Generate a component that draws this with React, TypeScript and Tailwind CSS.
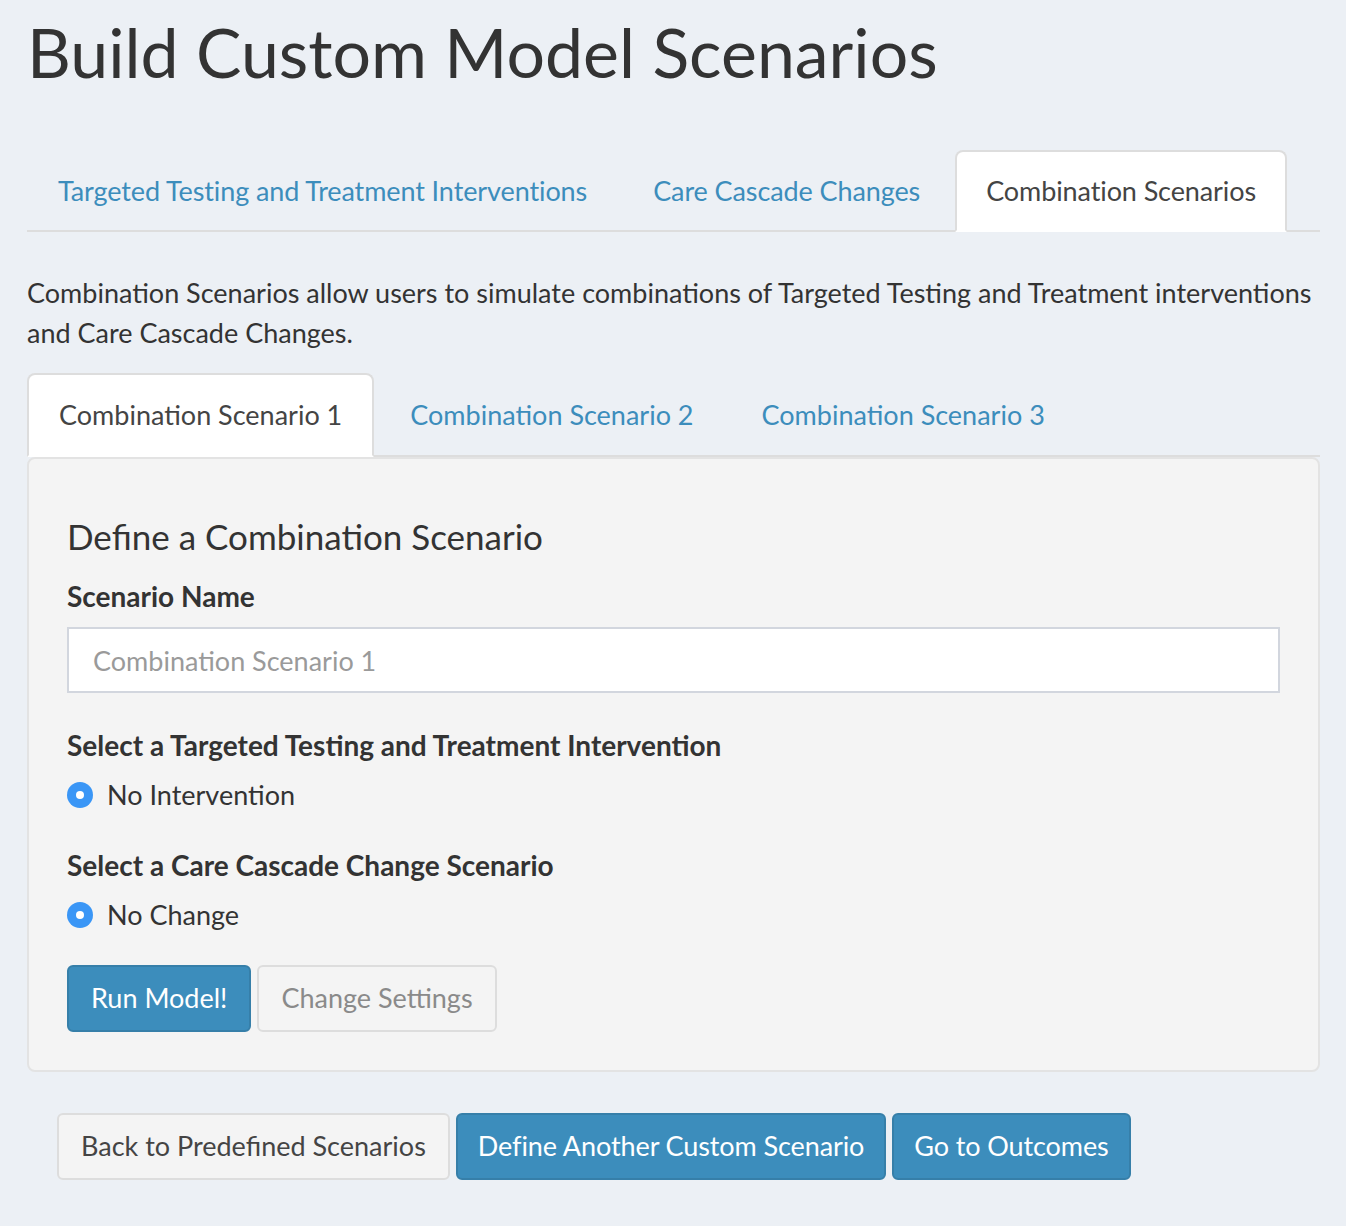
import React from "react";

const font = { fontFamily: "Lato, 'Noto Sans', sans-serif" };

function Radio({ label }: { label: string }) {
  return (
    <label className="flex items-center gap-[14px] h-[40px]">
      <span className="w-[26px] h-[26px] rounded-full bg-[#3a96f6] flex items-center justify-center">
        <span className="w-[8px] h-[8px] rounded-full bg-white" />
      </span>
      <span className="text-[27px] text-[#333]">{label}</span>
    </label>
  );
}

export default function App() {
  const topTabs = ["Targeted Testing and Treatment Interventions", "Care Cascade Changes", "Combination Scenarios"];
  const subTabs = ["Combination Scenario 1", "Combination Scenario 2", "Combination Scenario 3"];

  return (
    <div className="min-h-[1226px] bg-[#ecf0f5] px-[27px] pt-[10px] text-[#333]" style={font}>
      <h1 className="text-[68px] leading-[84px] text-[#333] font-normal">Build Custom Model Scenarios</h1>

      {/* top tabs */}
      <div className="mt-[56px] flex border-b-2 border-[#ddd] w-[1293px]">
        {topTabs.map((t, i) => (
          <div
            key={t}
            className={`mr-[4px] -mb-[2px] px-[29px] h-[82px] flex items-center whitespace-nowrap text-[27px] tracking-[-0.1px] rounded-t-[8px] border-2 ${
              i === 2 ? "bg-white border-[#ddd] border-b-white text-[#444]" : "border-transparent text-[#3c8dbc]"
            }`}
          >
            {t}
          </div>
        ))}
      </div>

      <p className="mt-[41px] text-[27px] leading-[40px] text-[#333] w-[1293px]">
        Combination Scenarios allow users to simulate combinations of Targeted Testing and Treatment interventions
        and Care Cascade Changes.
      </p>

      {/* sub tabs */}
      <div className="mt-[20px] flex border-b-2 border-[#ddd] w-[1293px]">
        {subTabs.map((t, i) => (
          <div
            key={t}
            className={`mr-[4px] -mb-[2px] px-[30px] h-[84px] flex items-center whitespace-nowrap text-[27px] rounded-t-[8px] border-2 ${
              i === 0 ? "bg-white border-[#ddd] border-b-white text-[#444]" : "border-transparent text-[#3c8dbc]"
            }`}
          >
            {t}
          </div>
        ))}
      </div>

      {/* panel */}
      <div className="w-[1293px] bg-[#f4f4f4] border-2 border-[#e3e3e3] rounded-[8px] px-[38px] pt-[55px] pb-[38px]">
        <h4 className="text-[35px] leading-[44px] text-[#333]">Define a Combination Scenario</h4>
        <div className="mt-[18px] text-[28px] leading-[40px] font-bold text-[#333]">Scenario Name</div>
        <input
          className="mt-[11px] w-full h-[66px] bg-white border-2 border-[#d2d6de] px-[24px] text-[27px] placeholder:text-[#9a9a9a] outline-none"
          placeholder="Combination Scenario 1"
          style={font}
        />
        <div className="mt-[32px] text-[28px] leading-[40px] font-bold text-[#333]">
          Select a Targeted Testing and Treatment Intervention
        </div>
        <div className="mt-[10px]">
          <Radio label="No Intervention" />
        </div>
        <div className="mt-[30px] text-[28px] leading-[40px] font-bold text-[#333]">
          Select a Care Cascade Change Scenario
        </div>
        <div className="mt-[10px]">
          <Radio label="No Change" />
        </div>
        <div className="mt-[30px] flex gap-[6px]">
          <button className="h-[67px] px-[22px] rounded-[6px] bg-[#3c8dbc] border-2 border-[#367fa9] text-white text-[27px]">
            Run Model!
          </button>
          <button className="h-[67px] px-[22px] rounded-[6px] bg-[#f4f4f4] border-2 border-[#ddd] text-[#8a8a8a] text-[27px]">
            Change Settings
          </button>
        </div>
      </div>

      {/* bottom buttons */}
      <div className="mt-[41px] ml-[30px] flex gap-[6px]">
        <button className="h-[67px] px-[22px] rounded-[6px] bg-[#f4f4f4] border-2 border-[#ddd] text-[#444] text-[27px]">
          Back to Predefined Scenarios
        </button>
        <button className="h-[67px] px-[20px] rounded-[6px] bg-[#3c8dbc] border-2 border-[#367fa9] text-white text-[27px] tracking-[-0.1px]">
          Define Another Custom Scenario
        </button>
        <button className="h-[67px] px-[20px] rounded-[6px] bg-[#3c8dbc] border-2 border-[#367fa9] text-white text-[27px] tracking-[-0.1px]">
          Go to Outcomes
        </button>
      </div>
    </div>
  );
}
